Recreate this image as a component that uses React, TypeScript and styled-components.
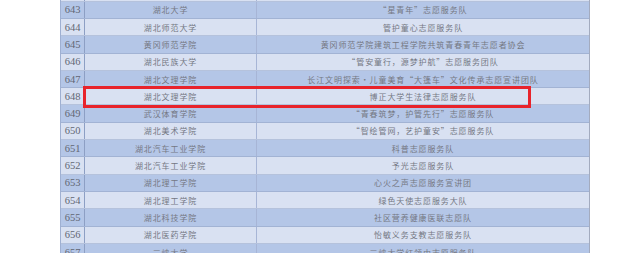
import React from "react";
import styled, { createGlobalStyle } from "styled-components";

const Global = createGlobalStyle`
  html, body { margin: 0; padding: 0; background: #ffffff; overflow: hidden; }
  body { width: 642px; height: 253px; }
`;

const Page = styled.div`
  width: 642px;
  height: 253px;
  overflow: hidden;
  background: #ffffff;
`;

const Table = styled.div`
  margin: -15.6px 0 0 60px;
  width: 530px;
  border-left: 1px solid #9fb0d2;
  border-right: 1px solid #a3abbf;
  box-sizing: border-box;
  display: flex;
  flex-direction: column;
`;

const Row = styled.div<{ $dark: boolean }>`
  position: relative;
  display: grid;
  grid-template-columns: 24px 172px 1fr;
  height: 17.3px;
  box-sizing: border-box;
  border-bottom: 1px solid ${(p) => (p.$dark ? "#a2b3d4" : "#b5c2dc")};
  background: ${(p) => (p.$dark ? "#b4c6e7" : "#d9e1f2")};
`;

const NumCell = styled.div`
  display: flex;
  align-items: center;
  justify-content: center;
  border-right: 1px solid #8d9fc4;
  font-family: "Liberation Serif", "DejaVu Serif", serif;
  font-size: 10.5px;
  color: #626774;
`;

const TextCell = styled.div<{ $last?: boolean }>`
  display: flex;
  align-items: center;
  justify-content: center;
  border-right: ${(p) => (p.$last ? "none" : "1px solid #a7b5d6")};
  font-family: "Noto Sans CJK SC", "Noto Sans", sans-serif;
  font-size: 8px;
  letter-spacing: 0.9px;
  color: #747883;
  white-space: nowrap;
  overflow: hidden;
`;

const Highlight = styled.div`
  position: absolute;
  z-index: 2;
  left: 22px;
  top: -2.3px;
  width: 448px;
  height: 22px;
  border: 3px solid #e8232b;
  box-sizing: border-box;
  pointer-events: none;
`;

const rows: [number, string, string, string][] = [
  [642, "", "", ""],
  [643, "643", "湖北大学", "“星青年”志愿服务队"],
  [644, "644", "湖北师范大学", "管护童心志愿服务队"],
  [645, "645", "黄冈师范学院", "黄冈师范学院建筑工程学院共筑青春青年志愿者协会"],
  [646, "646", "湖北民族大学", "“管安童行，源梦护航”志愿服务团队"],
  [647, "647", "湖北文理学院", "长江文明探索・儿童美育“大篷车”文化传承志愿宣讲团队"],
  [648, "648", "湖北文理学院", "博正大学生法律志愿服务队"],
  [649, "649", "武汉体育学院", "“青春筑梦，护管先行”志愿服务队"],
  [650, "650", "湖北美术学院", "“智绘管网，艺护童安”志愿服务队"],
  [651, "651", "湖北汽车工业学院", "科普志愿服务队"],
  [652, "652", "湖北汽车工业学院", "予光志愿服务队"],
  [653, "653", "湖北理工学院", "心火之声志愿服务宣讲团"],
  [654, "654", "湖北理工学院", "绿色天使志愿服务大队"],
  [655, "655", "湖北科技学院", "社区营养健康医联志愿队"],
  [656, "656", "湖北医药学院", "怡敏义务支教志愿服务队"],
  [657, "657", "三峡大学", "三峡大学红领巾志愿服务队"],
];

export default function App() {
  return (
    <Page>
      <Global />
      <Table>
        {rows.map(([n, label, school, team]) => (
          <Row key={n} $dark={n % 2 === 1}>
            <NumCell>{label}</NumCell>
            <TextCell>{school}</TextCell>
            <TextCell $last>{team}</TextCell>
            {n === 648 && <Highlight />}
          </Row>
        ))}
      </Table>
    </Page>
  );
}
